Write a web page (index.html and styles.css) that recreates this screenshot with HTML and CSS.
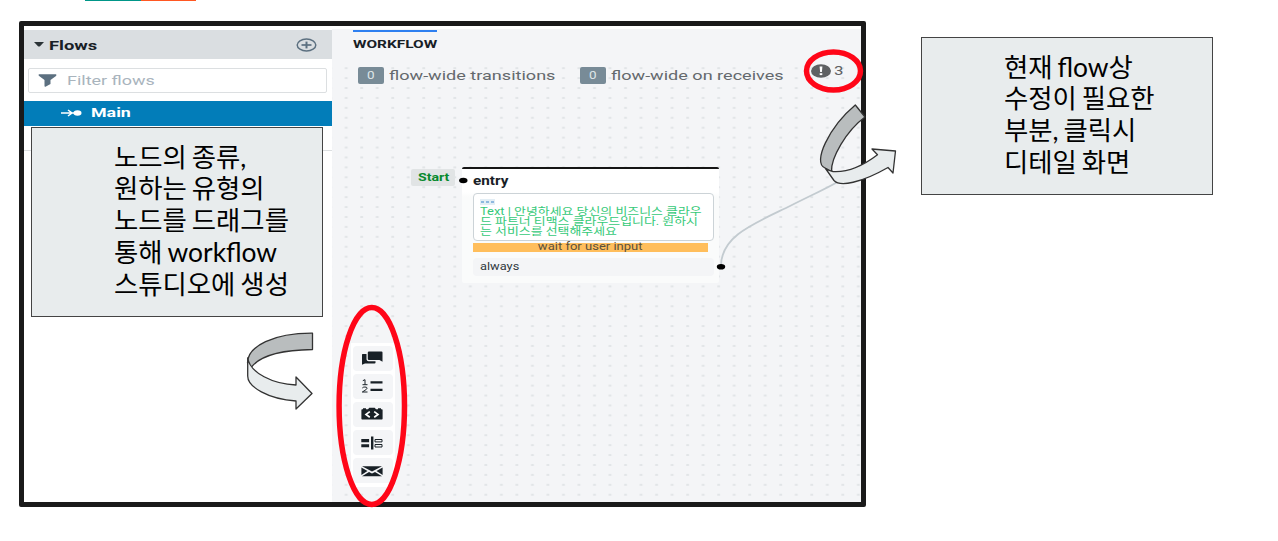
FILE: index.html
```html
<!DOCTYPE html>
<html lang="ko">
<head>
<meta charset="utf-8">
<title>Workflow</title>
<link rel="stylesheet" href="styles.css">
</head>
<body>
<main class="slide">
  <div class="accent"><i class="teal"></i><i class="orange"></i></div>
  <div class="shot">
    <aside class="sidebar">
      <header class="flows-head">
        <svg class="caret" width="10" height="5" viewBox="0 0 10 5"><path d="M0 0h10L6 4.200q-1 .8-2 0z" fill="#2b3337"/></svg>
        <b class="t flows-title">Flows</b>
        <svg class="plus" width="21" height="14" viewBox="0 0 21 14"><g fill="none" stroke="#5c7080"><ellipse cx="10.500" cy="7" rx="9.300" ry="6" stroke-width="1.500"/><path d="M5.500 7h10" stroke-width="1.700"/><path d="M10.500 3.600v6.800" stroke-width="2"/></g></svg>
      </header>
      <div class="filter">
        <svg width="19" height="13" viewBox="0 0 19 13"><path d="M1 .3h17q1 .6 0 1.600L12.500 6v4L7.500 12.700q-1 .3-1-.6V6L.8 1.800Q.2.7 1 .3z" fill="#5c7080"/></svg>
        <span class="t filter-text">Filter flows</span>
      </div>
      <div class="flow-item">
        <svg width="21" height="8" viewBox="0 0 21 8"><path d="M0 4h16M7 1l4 3-4 3" fill="none" stroke="#fff" stroke-width="1.500"/><ellipse cx="16.500" cy="4" rx="4" ry="2.700" fill="#fff"/></svg>
        <b class="t main-text">Main</b>
      </div>
      <div class="divider"></div>
    </aside>
    <section class="canvas">
      <svg class="grid" width="529" height="473"><defs><pattern id="dots" x="6.700" y="34.200" width="15.520" height="9.920" patternUnits="userSpaceOnUse"><rect x="6" y="4.200" width="3" height="1.500" rx=".6" fill="#dcdfe2"/></pattern></defs><rect y="37" width="529" height="436" fill="url(#dots)"/></svg>
      <div class="tab"><b class="t tab-text">WORKFLOW</b></div>
      <div class="wide">
        <span class="count"><span class="t zero">0</span></span><span class="t trans">flow-wide transitions</span>
        <span class="count second"><span class="t zero">0</span></span><span class="t recv">flow-wide on receives</span>
      </div>
      <div class="problems">
        <svg width="20" height="14" viewBox="0 0 20 14"><ellipse cx="10" cy="7" rx="10" ry="6.800" fill="#5f6163"/><path d="M8.600 2.600h2.800l-.5 5.400H9.100z" fill="#fff"/><path d="M8.700 9.200h2.600v1.900H8.700z" fill="#fff"/></svg>
        <span class="t three">3</span>
      </div>
      <div class="start"><b class="t start-text">Start</b></div>
      <article class="node">
        <h2 class="node-title"><span class="t entry">entry</span></h2>
        <div class="say">
          <span class="more"><i></i><i></i><i></i></span>
          <p class="t say-text">Text | 안녕하세요 당신의 비즈니스 클라우<br>드 파트너 티맥스 클라우드입니다. 원하시<br>는 서비스를 선택해주세요</p>
        </div>
        <div class="wait"><span class="t wait-text">wait for user input</span></div>
        <div class="always"><span class="t always-text">always</span></div>
      </article>
      <nav class="tools">
        <span><svg width="22" height="14" viewBox="0 0 22 14"><path d="M8 .6h12.500q1 0 1 .9v9.200L18.500 9H8q-1.200 0-1.200-1V1.500Q6.800.6 8 .6z"/><path d="M1.500 3h4v5.500q.3 1.500 2 1.700h7v1.500q0 .7-1 .7H4l-3 1.400V3.600z"/></svg></span>
        <span><svg width="22" height="14" viewBox="0 0 22 14"><path d="M1.800 1.700L4 .7V5.700M1.500 5.700h5M1.300 9q.7-1 2.600-1 2.200 0 2.200 1.200Q6 10.500 1.300 13h5.200" fill="none" stroke="#182026" stroke-width="1"/><path d="M9.500 2.200h12v2.200h-12zM9.500 9.800h12v2.300h-12z"/></svg></span>
        <span><svg width="22" height="14" viewBox="0 0 22 14"><path d="M2 2.300V1.200h3v1.100h2l1.300-1.500h5.400L15 2.300h2V1.200h3v1.100h.9q.7 0 .7.700v8.800q0 .7-.7.700H1.100q-.7 0-.7-.7V3q0-.7.700-.7z"/><path d="M8.800 4.600L5 7.400l3.800 2.800M13.200 4.600L17 7.400l-3.800 2.800" fill="none" stroke="#fff" stroke-width="1.700"/></svg></span>
        <span><svg width="22" height="14" viewBox="0 0 22 14"><path d="M.3 3h7.800v3.200H.3zM.3 8.200h7.800v3H.3zM10 .5h2.400v13H10z"/><path d="M14 3.500h7v2.400h-7zM14 8.500h7v2.500h-7z" fill="none" stroke="#182026"/></svg></span>
        <span><svg width="22" height="14" viewBox="0 0 22 14"><path d="M1 2.300h20L11 7.600zM.4 3.400L6.500 7 .4 11zM21.600 3.400L15.500 7l6.100 4zM1 12.200l7-4.300L11 9.500l3-1.600 7 4.300z"/></svg></span>
      </nav>
    </section>
  </div>
  <svg class="marks" width="1278" height="541" viewBox="0 0 1278 541">
    <path d="M721 266C721 236 753 224 790 206C820 191 832 186 848 176" fill="none" stroke="#c3cbd0" stroke-width="1.800"/>
    <g fill="#000"><ellipse cx="463.300" cy="180.500" rx="4.200" ry="2.800"/><ellipse cx="721" cy="266.800" rx="4.200" ry="2.800"/></g>
    <g fill="none" stroke="#ff0618" stroke-width="5.500"><ellipse cx="833.500" cy="71" rx="27" ry="19"/><ellipse cx="371.800" cy="406" rx="32.700" ry="98.500"/></g>
    <g stroke="#333" stroke-width="1.300" stroke-linejoin="round">
      <path d="M312.500 333.200C274 333 247.500 346 247.500 363Q248 366 251.500 367C260 356 282 350 312.500 349.500z" fill="#b9bdbe"/>
      <path d="M247.700 358V376C247.700 387 268 399 296 401V409L312 393.500 296 377V385C273 384 250 373 247.700 358z" fill="#e8eced"/>
      <path d="M855.300 105C829 127 812 163 825 168L831.500 171.500C831 158 846 131 865 117z" fill="#b9bdbe"/>
      <path d="M825.500 168.500Q828 170.500 833 171.500C849 172.500 864 165 877.500 154.700L872 149 895.500 151 893 173 888 167.500C861 183 840 187 834 180.500z" fill="#e8eced"/>
    </g>
  </svg>
  <div class="callout left">노드의 종류,<br>원하는 유형의<br>노드를 드래그를<br>통해 workflow<br>스튜디오에 생성</div>
  <div class="callout right">현재 flow상<br>수정이 필요한<br>부분, 클릭시<br>디테일 화면</div>
</main>
</body>
</html>
```
FILE: styles.css
```css
* { box-sizing: border-box; }
body { margin: 0; background: #fff; font-family: Roboto, "Noto Sans CJK KR", sans-serif; }
svg { display: block; flex: none; }
.slide { position: relative; width: 1278px; height: 541px; overflow: hidden; }
.accent { display: flex; height: 1px; padding-left: 85px; }
.accent i { width: 56px; }
.teal { background: #009688; }
.accent .orange { width: 55px; background: #ff5722; }
.shot { display: grid; grid-template-columns: 308px 1fr; width: 847px; height: 486px; margin: 20px 0 0 19px; border: 5px solid #1a1a1a; border-radius: 2px; background: #fff; }

/* Labels are drawn wider than their natural width */
.t { display: inline-block; white-space: nowrap; transform-origin: 0 50%; }

.sidebar { padding-top: 4px; }
.flows-head { display: flex; align-items: center; height: 29px; padding-left: 10px; background: #dadee1; }
.caret { margin-right: 5px; }
.flows-title { font-size: 13.500px; color: #182026; transform: scaleX(1.360); }
.plus { margin-left: auto; margin-right: 15px; }
.filter { display: flex; align-items: center; gap: 10px; height: 25px; margin: 8.500px 5px 0 4px; padding-left: 9px; border: 1px solid #dcdfe1; border-radius: 2px; }
.filter-text { margin-top: -1px; font-size: 13.500px; color: #a9b4bd; transform: scaleX(1.330); }
.flow-item { display: flex; align-items: center; gap: 9px; height: 25px; margin-top: 8px; padding-left: 37px; background: #027db9; color: #fff; }
.main-text { margin-top: -2px; font-size: 13.500px; transform: scaleX(1.320); }
.divider { height: 25px; border-bottom: 1px solid #dcdfe1; }

.canvas { position: relative; margin-top: 3px; background: #f4f5f7; }
.grid { position: absolute; left: 0; top: 0; }
.tab { height: 37px; padding: 1px 0 0 21px; }
.tab::before { content: ""; display: block; width: 84px; height: 1.500px; background: #2d7ff0; }
.tab-text { margin-top: 5px; font-size: 11.500px; color: #182026; transform: scaleX(1.340); }
.wide { display: flex; align-items: center; height: 17px; margin-top: 1px; padding-left: 26px; position: relative; }
.count { display: flex; align-items: center; justify-content: center; width: 26px; height: 17px; margin-right: 5px; border-radius: 2px; background: #788b97; }
.zero { font-size: 10px; color: #dfe5e8; transform-origin: 50%; transform: scaleX(1.350); }
.trans, .recv { width: 165px; margin-top: -2px; font-size: 13.500px; color: #64696d; transform: scaleX(1.338); }
.second { margin-left: 26px; }
.problems { display: flex; align-items: center; gap: 3px; position: absolute; left: 479px; top: 34px; }
.three { font-size: 13px; color: #5f6163; transform: scaleX(1.300); }
.start { position: absolute; left: 79px; top: 140px; display: flex; align-items: center; height: 17px; width: 44px; padding-left: 7px; border-radius: 2px; background: #e1e4e5; }
.start-text { margin-top: -1px; font-size: 11.500px; color: #078a2e; transform: scaleX(1.230); }
.node { position: absolute; left: 130px; top: 138px; width: 257px; height: 116px; padding: 0 5px 0 11px; border-top: 2px solid #151515; border-radius: 2px; background: linear-gradient(#fff 23px, #fafbfb 28px); }
.node-title { display: flex; align-items: center; height: 24px; margin: 0; font-size: 12.500px; color: #182026; }
.entry { margin-top: -2px; transform: scaleX(1.220); }
.say { height: 48px; padding: 5px 6px; border: 1px solid #ccd3d7; border-radius: 4px; background: #fff; }
.more { display: flex; align-items: center; justify-content: center; gap: 2px; width: 15px; height: 6px; background: #e3eef5; }
.more i { width: 3px; height: 1.500px; background: #8eb9df; }
.say-text { margin: 2px 0 0; font-size: 10px; line-height: 10px; color: #35c978; transform: scaleX(1.290); }
.wait { height: 8.500px; margin: 2px 6px 6.500px 0; display: flex; justify-content: center; align-items: center; background: #ffbe5c; }
.wait-text { margin-top: -1px; font-size: 10.500px; line-height: 8px; color: #5b513c; transform-origin: 50%; transform: scaleX(1.240); }
.always { display: flex; align-items: center; height: 18px; padding-left: 6.500px; border-radius: 4px; background: #f4f5f7; }
.always-text { margin-top: -2px; font-size: 10.500px; color: #30383d; transform: scaleX(1.220); }
.tools { position: absolute; left: 18.500px; top: 314px; width: 44px; height: 144px; display: flex; flex-direction: column; align-items: center; gap: 3.200px; padding-top: 2.500px; background: #fff; }
.tools span { display: flex; align-items: center; justify-content: center; width: 40px; height: 25px; padding-right: 1px; border-radius: 4px; background: #f4f5f7; }
.tools svg { fill: #182026; }

.marks { position: absolute; left: 0; top: 0; }
.callout { position: absolute; border: 1.500px solid #444; background: #e8eced; color: #000; font: 26.400px/31.800px Lato, "Noto Sans CJK KR", sans-serif; word-spacing: -1.800px; white-space: nowrap; }
.left { left: 31px; top: 127px; width: 292px; height: 190px; padding: 13.500px 0 0 82px; }
.right { left: 921px; top: 37px; width: 292px; height: 158px; padding: 13.500px 0 0 82px; }
```
